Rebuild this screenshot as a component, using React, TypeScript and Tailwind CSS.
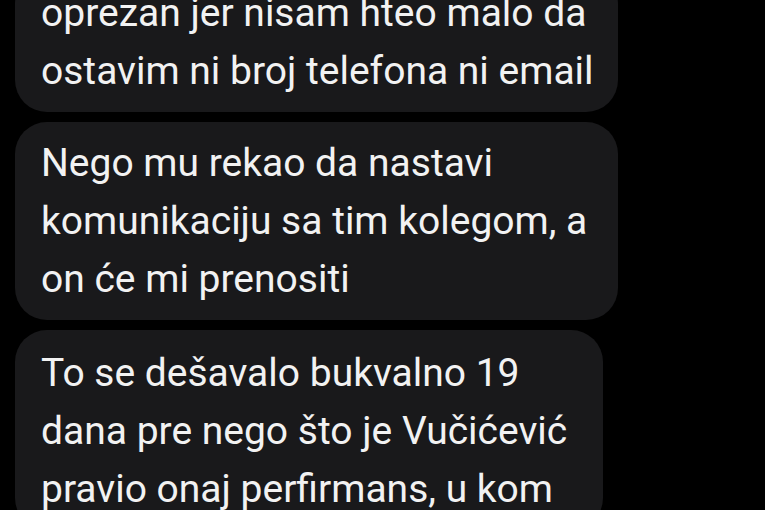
const BUBBLES = [
    {
        width: "w-[603px]",
        lines: ["oprezan jer nisam hteo malo da", "ostavim ni broj telefona ni email"],
    },
    {
        width: "w-[603px]",
        lines: ["Nego mu rekao da nastavi", "komunikaciju sa tim kolegom, a", "on će mi prenositi"],
    },
    {
        width: "w-[588px]",
        lines: ["To se dešavalo bukvalno 19", "dana pre nego što je Vučićević", "pravio onaj perfirmans, u kom"],
    },
];

export default function App() {
    return (
        <div className="h-[510px] w-[765px] overflow-hidden bg-black">
            <div className="-mt-[28px] flex flex-col gap-[10px] pl-[15px]">
                {BUBBLES.map((b, i) => (
                    <div
                        key={i}
                        className={`${b.width} rounded-[32px] bg-[#19191b] pl-[26px] pr-6 py-3 last:pt-[14px]`}
                    >
                        {b.lines.map((line) => (
                            <p
                                key={line}
                                className="whitespace-nowrap text-[39px] leading-[58px] text-[#f2f2f2]"
                                style={{ fontFamily: "Roboto, 'Noto Sans', sans-serif" }}
                            >
                                {line}
                            </p>
                        ))}
                    </div>
                ))}
            </div>
        </div>
    );
}
